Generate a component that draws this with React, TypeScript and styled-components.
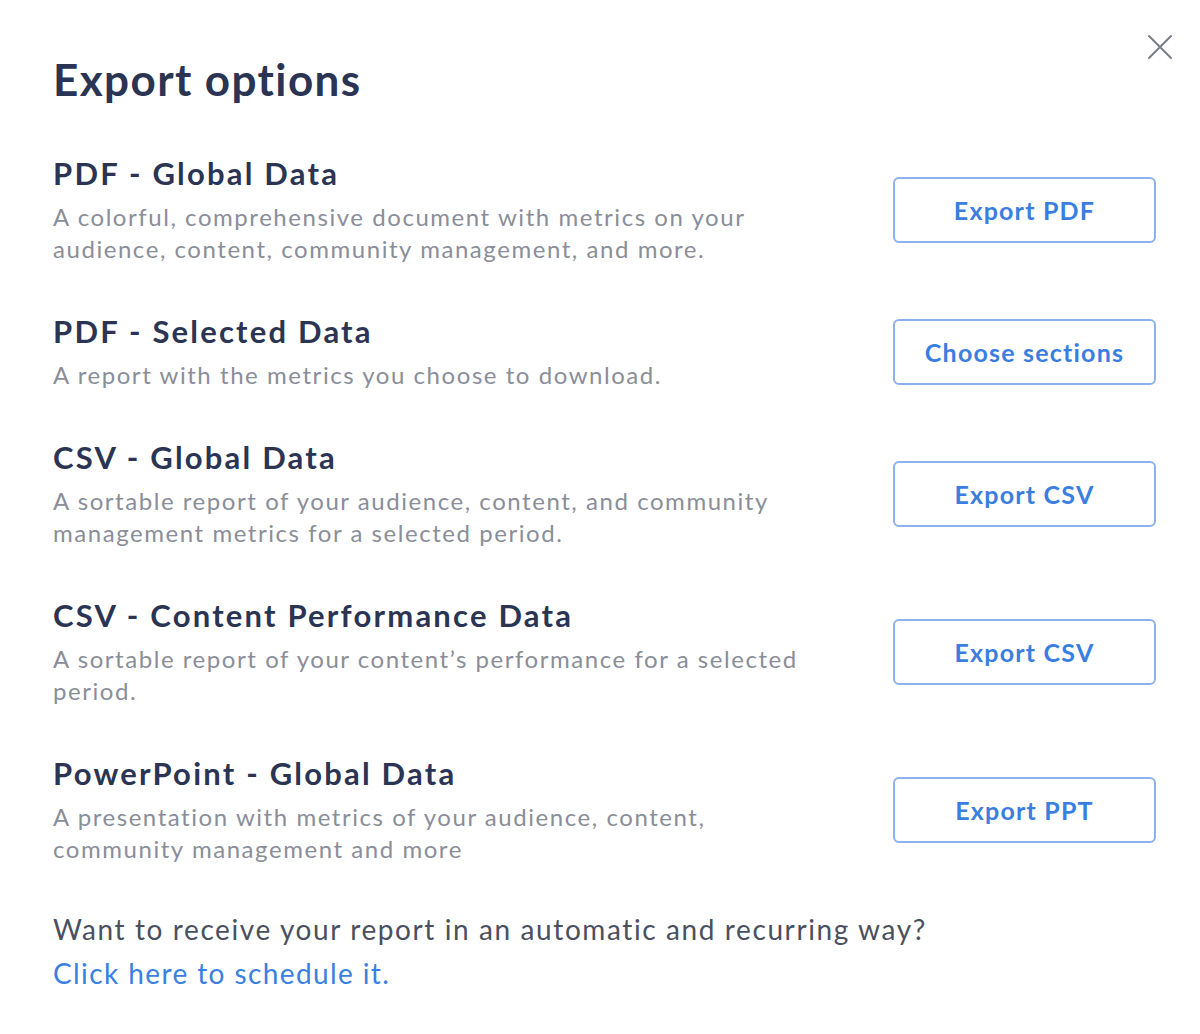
import React from "react";
import styled, { createGlobalStyle } from "styled-components";

const Global = createGlobalStyle`
  html, body { margin: 0; padding: 0; background: #ffffff; }
  body { font-family: "Lato", "Noto Sans", sans-serif; -webkit-font-smoothing: antialiased; }
  * { box-sizing: border-box; }
`;

const Modal = styled.div`
  position: relative;
  width: 1200px;
  height: 1034px;
  padding: 52px 44px 0 53px;
  background: #fff;
`;

const Close = styled.button`
  position: absolute;
  top: 33px;
  right: 26px;
  width: 28px;
  height: 28px;
  padding: 0;
  border: none;
  background: transparent;
  cursor: pointer;
  display: flex;
  align-items: center;
  justify-content: center;
`;

const Title = styled.h1`
  margin: 0 0 48px;
  font-size: 44px;
  line-height: 54px;
  font-weight: 700;
  color: #2b3553;
  letter-spacing: 1.4px;
`;

const List = styled.div`
  display: flex;
  flex-direction: column;
  gap: 47px;
`;

const Row = styled.div`
  display: flex;
  align-items: center;
  justify-content: space-between;
`;

const Info = styled.div`
  width: 790px;
`;

const OptionTitle = styled.h2`
  margin: 0 0 9px;
  font-size: 31px;
  line-height: 38px;
  font-weight: 700;
  color: #2b3553;
  letter-spacing: 2.2px;
`;

const Desc = styled.p`
  margin: 0;
  font-size: 24px;
  line-height: 32px;
  font-weight: 400;
  color: #8a8e99;
  letter-spacing: 1.55px;
`;

const ActionButton = styled.button`
  width: 263px;
  height: 66px;
  border: 2px solid #8db1ea;
  border-radius: 6px;
  background: #fff;
  color: #3a7ee0;
  font-family: inherit;
  font-size: 25px;
  font-weight: 700;
  letter-spacing: 1.2px;
  cursor: pointer;
`;

const Footer = styled.div`
  margin-top: 42px;
  font-size: 28px;
  line-height: 44px;
  color: #4a5060;
  letter-spacing: 1.6px;
`;

const Link = styled.a`
  display: block;
  color: #3a80e0;
  text-decoration: none;
  cursor: pointer;
  letter-spacing: 1.4px;
`;

const options = [
  {
    title: "PDF - Global Data",
    desc: ["A colorful, comprehensive document with metrics on your", "audience, content, community management, and more."],
    action: "Export PDF",
  },
  {
    title: "PDF - Selected Data",
    desc: ["A report with the metrics you choose to download."],
    action: "Choose sections",
  },
  {
    title: "CSV - Global Data",
    desc: ["A sortable report of your audience, content, and community", "management metrics for a selected period."],
    action: "Export CSV",
  },
  {
    title: "CSV - Content Performance Data",
    desc: ["A sortable report of your content\u2019s performance for a selected", "period."],
    action: "Export CSV",
  },
  {
    title: "PowerPoint - Global Data",
    desc: ["A presentation with metrics of your audience, content,", "community management and more"],
    action: "Export PPT",
  },
];

export default function App() {
  return (
    <>
      <Global />
      <Modal>
        <Close aria-label="Close">
          <svg width="26" height="26" viewBox="0 0 26 26" fill="none" stroke="#7a7d85" strokeWidth="2" strokeLinecap="round">
            <path d="M2 2 L24 24 M24 2 L2 24" />
          </svg>
        </Close>
        <Title>Export options</Title>
        <List>
          {options.map((o, i) => (
            <Row key={i}>
              <Info>
                <OptionTitle>{o.title}</OptionTitle>
                <Desc>
                  {o.desc.map((l, j) => (
                    <React.Fragment key={j}>
                      {l}
                      {j < o.desc.length - 1 && <br />}
                    </React.Fragment>
                  ))}
                </Desc>
              </Info>
              <ActionButton>{o.action}</ActionButton>
            </Row>
          ))}
        </List>
        <Footer>
          Want to receive your report in an automatic and recurring way?
          <Link>Click here to schedule it.</Link>
        </Footer>
      </Modal>
    </>
  );
}
